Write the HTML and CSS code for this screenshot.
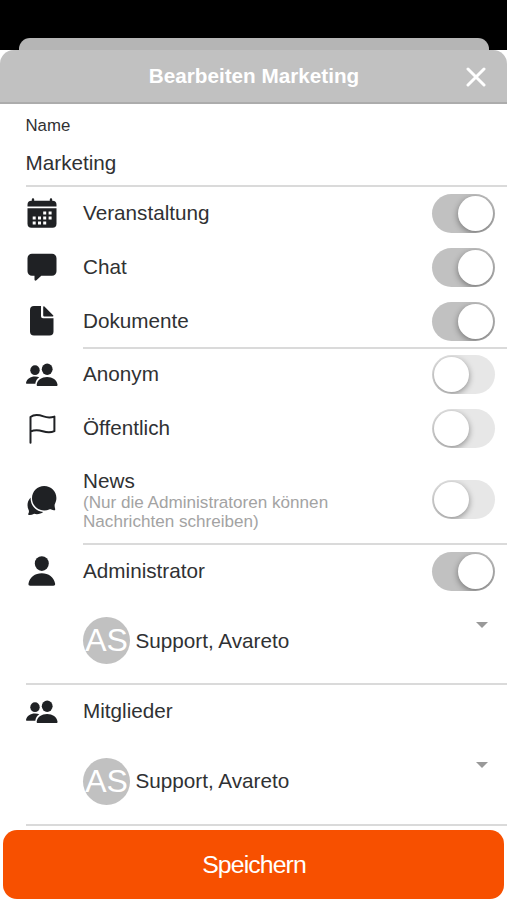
FILE: index.html
```
<!DOCTYPE html>
<html lang="de">
<head>
<meta charset="UTF-8">
<meta name="viewport" content="width=device-width, initial-scale=1.0">
<title>Bearbeiten Marketing</title>
<!-- Styles -->
<link rel="stylesheet" href="styles.css">
</head>
<body>

<!-- Icons -->
<svg class="sprite">
  <symbol id="people" viewBox="0 0 32 32">
    <ellipse cx="9" cy="11.2" rx="4.7" ry="4.9"/>
    <path d="M1.2 24.800c-.9 0-1.300-.5-1.100-1.300C1 19.800 4.300 17.400 9 17.400c1.700 0 3.100.3 4.300.8-2.400 1.400-3.600 3.500-4 6.600z"/>
    <ellipse cx="21.2" cy="10.3" rx="5.4" ry="5.700"/>
    <path d="M12 27c-.9 0-1.500-.7-1.300-1.600.9-4.700 4.900-7.500 10.400-7.500s9.500 2.800 10.400 7.500c.2.900-.4 1.600-1.300 1.600z"/>
  </symbol>
</svg>

<div class="status-bar"><div class="back-sheet"></div></div>

<header class="header">
  <h1>Bearbeiten Marketing</h1>
  <button class="close" aria-label="Schließen">
    <svg width="20" height="20" viewBox="0 0 20 20"><path d="M2 2l16 16M18 2L2 18"/></svg>
  </button>
</header>

<main>
  <div class="name-field">
    <label for="name">Name</label>
    <input type="text" id="name" value="Marketing">
  </div>

  <div class="row">
    <svg class="icon" viewBox="0 0 32 32">
      <path d="M1.500 8.500V6.800A4 4 0 0 1 5.500 2.800h.3V1.500a1.200 1.200 0 0 1 2.400 0v1.300h15.600V1.500a1.200 1.200 0 0 1 2.400 0v1.300h.3a4 4 0 0 1 4 4V8.500z"/>
      <path d="M1.500 10.300h29v15.500a4 4 0 0 1-4 4h-21a4 4 0 0 1-4-4z"/>
      <path class="days" d="M17.200 13.500h3v3h-3zM22.600 13.500h3v3h-3zM6.700 18.500h3v3h-3zM12 18.500h3v3h-3zM17.200 18.500h3v3h-3zM22.600 18.500h3v3h-3zM6.700 23.500h3v3h-3zM12 23.500h3v3h-3zM17.200 23.500h3v3h-3z"/>
    </svg>
    <div class="label">Veranstaltung</div>
    <div class="toggle on"></div>
  </div>

  <div class="row">
    <svg class="icon" viewBox="0 0 32 32">
      <path d="M6 1.800h20a4.500 4.500 0 0 1 4.500 4.500v13a4.500 4.500 0 0 1-4.500 4.500H15.300l-4.900 4.500c-.9.800-1.900.4-1.900-.7v-3.800H6a4.500 4.500 0 0 1-4.500-4.500v-13A4.500 4.500 0 0 1 6 1.800z"/>
    </svg>
    <div class="label">Chat</div>
    <div class="toggle on"></div>
  </div>

  <div class="row">
    <svg class="icon" viewBox="0 0 32 32">
      <path d="M8 1h7v10.300a2 2 0 0 0 2 2h10.500V26.500a4 4 0 0 1-4 4H8a4 4 0 0 1-4-4V5a4 4 0 0 1 4-4z"/>
      <path d="M17.200 1.900c0-.8.600-1 1.200-.4l8.700 8.800c.6.700.4 1.200-.4 1.200h-8.500a1 1 0 0 1-1-1z"/>
    </svg>
    <div class="label">Dokumente</div>
    <div class="toggle on"></div>
  </div>

  <div class="row line">
    <svg class="icon"><use href="#people"/></svg>
    <div class="label">Anonym</div>
    <div class="toggle"></div>
  </div>

  <div class="row">
    <svg class="icon outline" viewBox="0 0 32 32">
      <path d="M4.500 29.800V4C7 2 12 1.400 17.500 3.400c4.500 1.600 7.500 1.300 10.900.2V18.200c-3.600 1.600-7.200 1.500-11.700.1C12 16.800 8 17 4.500 18.600"/>
    </svg>
    <div class="label">Öffentlich</div>
    <div class="toggle"></div>
  </div>

  <div class="row news">
    <svg class="icon" viewBox="0 0 32 32">
      <path d="M4.600 13.500c-.2 7.700 4.700 13.500 12.600 14.600-2.400 1.900-6 2.600-9 1.700-1.800.9-3.700 1.400-5.300 1.200-.8-.1-.9-.9-.5-1.500.7-1.100.7-2.500.2-3.700C1 22.600.8 17.700 4.600 13.500z"/>
      <path d="M18.200 2c6.800 0 12.200 5.300 12.200 11.900 0 2.700-.9 4.700-1.700 6.500-.3 1 .2 3.400.5 4.700.2.900-.6 1.500-1.400 1.200-1.200-.4-3.200-1.200-4.100-1-1.900.8-3.600 1.200-5.500 1.200C11.300 26.500 6 20.800 6 14.200 6 7.400 11.400 2 18.200 2z"/>
    </svg>
    <div class="label">News
      <small>(Nur die Administratoren können Nachrichten schreiben)</small>
    </div>
    <div class="toggle"></div>
  </div>

  <div class="row line">
    <svg class="icon" viewBox="0 0 32 32">
      <ellipse cx="15.800" cy="8.600" rx="7" ry="7.400"/>
      <path d="M4.300 30.800c-1.300 0-2.100-1-1.800-2.300C3.700 22.300 9 18.300 15.800 18.300S27.900 22.300 29.100 28.500c.3 1.300-.5 2.300-1.800 2.300z"/>
    </svg>
    <div class="label">Administrator</div>
    <div class="toggle on"></div>
  </div>
  <div class="person">
    <div class="avatar">AS</div>
    <span>Support, Avareto</span>
    <div class="arrow"></div>
  </div>

  <div class="row">
    <svg class="icon"><use href="#people"/></svg>
    <div class="label">Mitglieder</div>
  </div>
  <div class="person">
    <div class="avatar">AS</div>
    <span>Support, Avareto</span>
    <div class="arrow"></div>
  </div>
</main>

<button class="save">Speichern</button>

</body>
</html>
```
FILE: styles.css
```
* {
  box-sizing: border-box;
}

body {
  margin: 0;
  height: 900px;
  overflow: hidden;
  font-family: "Liberation Sans", Arial, sans-serif;
  font-size: 20.7px;
  color: #303133;
  background-color: #fff;
}

.sprite {
  display: none;
}

.status-bar {
  height: 50px;
  padding: 38px 18px 0 19px;
  background-color: #000;
}

.back-sheet {
  height: 12px;
  border-radius: 11px 11px 0 0;
  background-color: #b5b5b5;
}

.header {
  display: flex;
  align-items: center;
  height: 54px;
  padding: 0 21px 0 42px;
  border-bottom: 2px solid #acacac;
  border-radius: 14px 14px 0 0;
  background-color: #c1c1c1;
}

.header h1 {
  flex: 1;
  margin: 0;
  font-size: 20.7px;
  text-align: center;
  color: #fff;
}

.close {
  display: flex;
  width: 20px;
  padding: 0;
  margin-top: 2px;
  border: none;
  background: none;
}

.close path {
  fill: none;
  stroke: #fff;
  stroke-width: 3;
  stroke-linecap: round;
}

main {
  padding-left: 25.5px;
}

.name-field {
  height: 83px;
  padding-top: 12px;
  border-bottom: 2px solid #dadada;
}

.name-field label {
  display: block;
  font-size: 16.8px;
  line-height: 19px;
}

.name-field input {
  display: block;
  width: 100%;
  height: 26px;
  margin-top: 15px;
  padding: 0;
  border: none;
  font: inherit;
  color: inherit;
}

.row {
  position: relative;
  display: flex;
  align-items: center;
  height: 53.7px;
  padding-right: 12px;
}

/* separator starts at the label, not at the icon */
.line::before {
  content: "";
  position: absolute;
  top: -1px;
  left: 57.5px;
  right: 0;
  height: 2px;
  background-color: #dadada;
}

.news {
  height: 89px;
}

.icon {
  width: 32px;
  height: 32px;
  margin-right: 25.5px;
  fill: #1f2124;
}

.days {
  fill: #fff;
}

.outline {
  fill: none;
  stroke: #1f2124;
  stroke-width: 2;
  stroke-linecap: round;
  stroke-linejoin: round;
}

.label {
  flex: 1;
  padding-bottom: 1.4px;
}

.news .label {
  padding-bottom: 0;
  line-height: 25px;
}

.label small {
  display: block;
  width: 270px;
  font-size: 17.1px;
  line-height: 19.5px;
  color: #a3a3a3;
}

.toggle {
  width: 63px;
  height: 39px;
  padding: 2px;
  border-radius: 20px;
  background-color: #e7e7e7;
  overflow: hidden;
}

.toggle::before {
  content: "";
  display: block;
  width: 35px;
  height: 35px;
  border-radius: 50%;
  background-color: #fff;
  box-shadow: 0 2px 6px rgba(0, 0, 0, 0.4);
}

.toggle.on {
  background-color: #c1c1c1;
}

.toggle.on::before {
  margin-left: auto;
}

.person {
  display: flex;
  align-items: center;
  height: 87px;
  padding: 0 19px 0 57.5px;
  border-bottom: 2px solid #dadada;
}

.avatar {
  display: flex;
  align-items: center;
  justify-content: center;
  width: 47px;
  height: 47px;
  margin-right: 5.5px;
  border-radius: 50%;
  font-size: 32px;
  color: #fff;
  background-color: #c1c1c1;
}

.arrow {
  margin: 0 0 32px auto;
  border: 6px solid transparent;
  border-top-color: #999;
  border-bottom: none;
}

.save {
  display: block;
  width: 501px;
  height: 69px;
  margin: 4px 0 0 3px;
  padding: 1px 0 0 1px;
  border: none;
  border-radius: 14px;
  font-family: inherit;
  font-size: 24.8px;
  letter-spacing: -0.9px;
  color: #fff;
  background-color: #f75000;
}
```
